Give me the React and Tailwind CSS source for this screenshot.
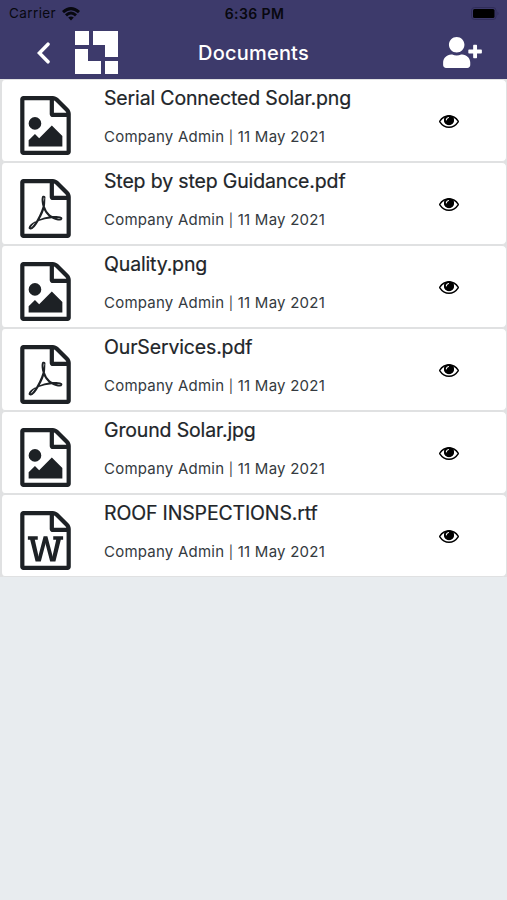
import React from "react";
import { FaUserPlus } from "react-icons/fa";

const SHEET =
  "M1468 380q28 28 48 76t20 88v1152q0 40-28 68t-68 28h-1344q-40 0-68-28t-28-68v-1600q0-40 28-68t68-28h896q40 0 88 20t76 48zM1024 136v376h376q-10-29-22-41l-313-313q-12-12-41-22zM1408 1664v-1024h-416q-40 0-68-28t-28-68v-416h-768v1536h1280z";

const GLYPHS = {
  image:
    "M1280 1216v320h-1024v-192l192-192 128 128 384-384zM448 1024q-80 0-136-56t-56-136 56-136 136-56 136 56 56 136-56 136-136 56z",
  pdf: "M894 1071q33 26 84 56 59-7 117-7 147 0 177 49 16 22 2 52 0 1-1 2l-2 2v1q-6 38-71 38-48 0-115-20t-130-53q-221 24-392 83-153 262-242 262-15 0-28-7l-24-12q-1-1-6-5-10-10-6-36 9-40 56-91.500t132-96.500q14-9 23 6 2 2 2 4 52-85 107-197 68-136 104-262-24-82-30.500-159.500t6.500-127.500q11-40 42-40h22q23 0 35 15 18 21 9 68-2 6-4 8 1 3 1 8v30q-2 123-14 192 55 164 146 238zm-576 411q52-24 137-158-51 40-87.500 84t-49.500 74zm398-920q-15 42-2 132 1-7 7-44 0-3 7-43 1-4 4-8-1-1-1-2-1-2-1-3-1-22-13-36 0 1-1 2v2zm-124 661q135-54 284-81-2-1-13-9.500t-16-13.500q-76-67-127-176-27 86-83 197-30 56-45 83zm646-16q-24-24-140-24 76 28 124 28 14 0 18-1 0-1-2-3z",
  word: "M233 768v107h70l164 661h159l128-485q7-20 10-46 2-16 2-24h4l3 24q1 3 3.500 20t5.500 26l128 485h159l164-661h70v-107h-300v107h90l-99 438q-5 20-7 46l-2 21h-4l-3-21q-1-5-4-21t-5-25l-144-545h-114l-144 545q-2 9-4.500 24.500t-3.500 21.500l-4 21h-4l-2-21q-2-26-7-46l-99-438h90v-107h-300z",
};

const DOCUMENTS = [
  { name: "Serial Connected Solar.png", type: "image" },
  { name: "Step by step Guidance.pdf", type: "pdf" },
  { name: "Quality.png", type: "image" },
  { name: "OurServices.pdf", type: "pdf" },
  { name: "Ground Solar.jpg", type: "image" },
  { name: "ROOF INSPECTIONS.rtf", type: "word" },
];

function FileIcon({ type }) {
  return (
    <svg viewBox="0 0 1536 1792" className="h-[59px] w-[51px] shrink-0 fill-[#1d2125]">
      <path d={SHEET} />
      <path d={GLYPHS[type]} />
    </svg>
  );
}

function EyeIcon() {
  return (
    <svg viewBox="0 384 1792 1152" className="h-[13px] w-5 fill-black">
      <path d="M1664 960q-152-236-381-353 61 104 61 225 0 185-131.500 316.500t-316.500 131.500-316.500-131.500-131.500-316.500q0-121 61-225-229 117-381 353 133 205 333.500 326.500t434.500 121.500 434.500-121.500 333.500-326.500zM1792 960q0 34-20 69-140 230-376.500 368.500t-499.500 138.500-499.500-139-376.500-368q-20-35-20-69t20-69q140-229 376.500-368t499.500-139 499.500 139 376.500 368q20 35 20 69z" />
      <circle cx="896" cy="850" r="440" />
      <path d="M655 815Q670 640 850 600" fill="none" stroke="#fff" strokeWidth="95" strokeLinecap="round" />
    </svg>
  );
}

function StatusBar() {
  return (
    <div className="grid h-[27px] grid-cols-3 items-center pl-[9px] pr-[7px] text-[13.5px] text-[#08080f]">
      <div className="flex items-center gap-1.5">
        <span className="tracking-[0.4px]">Carrier</span>
        <svg viewBox="0 0 18 14" className="h-[14px] w-[18px]" fill="none" stroke="#08080f" strokeWidth="3">
          <path d="M1 5.200Q9-2 17 5.200" />
          <path d="M4 8.300Q9 3.800 14 8.300" />
          <path d="M6.200 10.600Q9 8.300 11.800 10.600L9 13.500Z" fill="#08080f" stroke="none" />
        </svg>
      </div>
      <span className="text-center text-[14px] font-semibold tracking-[0.4px]">6:36 PM</span>
      <svg viewBox="0 0 29 13" className="h-[13px] w-[29px] justify-self-end">
        <rect x="0.500" y="0.500" width="24.500" height="12" rx="3" fill="none" stroke="#302d5a" />
        <rect x="2" y="2" width="21.500" height="9" rx="1.500" fill="#000" />
        <path d="M26.500 4.500Q28.500 6.500 26.500 8.500Z" fill="#302d5a" />
      </svg>
    </div>
  );
}

function Header() {
  return (
    <header className="h-[79px] bg-[#3d3a6b]">
      <StatusBar />
      <div className="grid h-[51px] grid-cols-[1fr_auto_1fr] items-center text-white">
        <div className="flex items-center pl-[37px]">
          <svg viewBox="0 0 13 22" className="h-[22px] w-[13px]" fill="none" stroke="currentColor" strokeWidth="3.500" strokeLinecap="round">
            <path d="M11 2.200L2.400 11L11 19.800" />
          </svg>
          <svg viewBox="0 0 43 43" className="ml-[25px] h-[43px] w-[43px] fill-white">
            <path d="M0 0H14V14H0ZM18 0H43V26H30V14H18ZM0 18H13V30H26V43H0ZM30 30H43V43H30Z" />
          </svg>
        </div>
        <h1 className="text-[20px] leading-none font-medium tracking-[0.2px]">Documents</h1>
        <div className="flex justify-end pr-[25px]">
          <FaUserPlus className="h-[31px] w-[39px]" />
        </div>
      </div>
    </header>
  );
}

function DocumentRow({ name, type }) {
  return (
    <li className="flex h-[83px] rounded-[5px] border-y border-r border-l-2 border-[#e0e1e2] bg-white pt-[16px] pl-[18px]">
      <FileIcon type={type} />
      <div className="-mt-[12px] ml-[33px] w-[300px] whitespace-nowrap">
        <h2 className="text-[19.5px] leading-[28px] tracking-[-0.15px] text-[#212529] [-webkit-text-stroke:0.2px_#212529]">{name}</h2>
        <p className="mt-[14px] text-[15px] leading-[22px] tracking-[0.23px] text-[#343a40]">
          Company Admin <span className="text-[13px]">|</span> 11 May 2021
        </p>
      </div>
      <div className="mt-[19px] ml-[35px]">
        <EyeIcon />
      </div>
    </li>
  );
}

export default function App() {
  return (
    <div className="min-h-screen w-full bg-[#e8ecef] font-['Inter','Liberation_Sans',sans-serif]">
      <Header />
      <ul className="bg-[#e0e1e2]">
        {DOCUMENTS.map((doc) => (
          <DocumentRow key={doc.name} {...doc} />
        ))}
      </ul>
    </div>
  );
}
